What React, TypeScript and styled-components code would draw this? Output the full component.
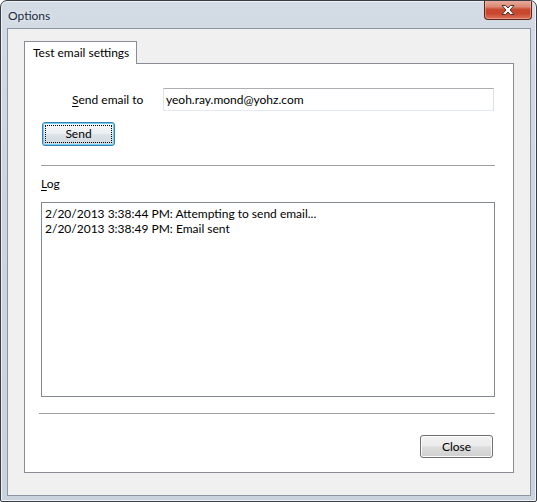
import React from "react";
import styled, { createGlobalStyle } from "styled-components";

const Global = createGlobalStyle`
  html, body { margin: 0; padding: 0; background: #ffffff; }
  body { font-family: "Lato", "Open Sans", sans-serif; font-size: 12px; color: #000; }
  * { box-sizing: border-box; }
`;

const Window = styled.div`
  width: 537px;
  height: 502px;
  border: 1px solid #3a3d42;
  border-radius: 7px 7px 2px 2px;
  background: linear-gradient(180deg, #d3dbe4 0%, #ccd6e0 40%, #c9d3de 100%);
  box-shadow: inset 0 0 0 1px #eef2f6;
  display: flex;
  flex-direction: column;
  overflow: hidden;
`;

const TitleBar = styled.div`
  height: 27px;
  display: flex;
  align-items: flex-start;
  justify-content: space-between;
`;

const Title = styled.div`
  padding: 7px 0 0 7px;
  font-size: 12px;
  color: #1b2c40;
  text-shadow: 0 0 6px rgba(255, 255, 255, 0.9);
`;

const CloseCaption = styled.div`
  margin: -1px 4px 0 0;
  width: 48px;
  height: 20px;
  border: 1px solid #5b2419;
  border-top: none;
  border-radius: 0 0 4px 4px;
  background: linear-gradient(180deg, #e9b0a2 0%, #dc8a76 35%, #c94a30 50%, #c8452b 70%, #d9745a 100%);
  box-shadow: inset 0 0 0 1px rgba(255, 200, 180, 0.45);
  display: flex;
  align-items: center;
  justify-content: center;
`;

const Client = styled.div`
  flex: 1;
  margin: 0 5px 5px 6px;
  border: 1px solid #8b96a2;
  background: #f0f0f0;
  padding: 12px 16px 22px 16px;
  display: flex;
  flex-direction: column;
`;

const TabStrip = styled.div`
  display: flex;
  height: 22px;
  position: relative;
  z-index: 1;
`;

const Tab = styled.div`
  height: 23px;
  padding: 0 7px 0 8px;
  border: 1px solid #898c95;
  border-bottom: none;
  background: #ffffff;
  display: flex;
  align-items: center;
  padding-bottom: 2px;
`;

const Panel = styled.div`
  flex: 1;
  border: 1px solid #898c95;
  background: #ffffff;
  display: flex;
  flex-direction: column;
  padding: 0 18px 0 16px;
`;

const FormRow = styled.div`
  display: flex;
  align-items: center;
  margin: 24px 1px 0 31px;
  height: 23px;
`;

const Label = styled.label`
  width: 91px;
  flex: none;
`;

const Key = styled.span`
  text-decoration: underline;
  text-underline-offset: 2px;
`;

const TextBox = styled.div`
  flex: 1;
  height: 23px;
  border: 1px solid;
  border-color: #abadb3 #dbdfe6 #e3e9ef #e2e3ea;
  padding: 0 2px;
  display: flex;
  align-items: center;
`;

const Button = styled.button<{ $default?: boolean }>`
  position: relative;
  width: 73px;
  height: ${(p) => (p.$default ? 24 : 23)}px;
  padding: 0 0 1px 0;
  font: inherit;
  color: #000;
  border-radius: 3px;
  border: 1px solid ${(p) => (p.$default ? "#3c7fb1" : "#707070")};
  background: ${(p) =>
    p.$default
      ? "linear-gradient(180deg, #f6f8fa 0%, #eceff2 48%, #dde3e8 52%, #d0d8de 100%)"
      : "linear-gradient(180deg, #f2f2f2 0%, #ebebeb 48%, #dddddd 52%, #cfcfcf 100%)"};
  box-shadow: inset 0 0 0 1px ${(p) => (p.$default ? "#6fd0f6" : "#fbfbfb")};
`;

const FocusRing = styled.span`
  position: absolute;
  inset: 2px;
  border: 1px dotted #000;
  border-radius: 1px;
`;

const SendButton = styled(Button)`
  margin: 11px 0 0 1px;
`;

const Separator = styled.div<{ $top: number; $left?: number }>`
  height: 1px;
  background: #a0a0a0;
  margin-top: ${(p) => p.$top}px;
  margin-left: ${(p) => p.$left ?? 0}px;
`;

const SectionLabel = styled.div`
  margin-top: 10px;
  height: 16px;
  line-height: 16px;
`;

const LogBox = styled.div`
  margin-top: 10px;
  height: 195px;
  border: 1px solid #828790;
  padding: 3px 3px;
  line-height: 15px;
`;

const Footer = styled.div`
  display: flex;
  justify-content: flex-end;
  margin-top: 21px;
  padding-right: 2px;
`;

const CloseX = () => (
  <svg width="16" height="12" viewBox="0 0 16 12">
    <path
      d="M2 1.5 L5.5 1.5 L8 4 L10.5 1.5 L14 1.5 L10 6 L14 10.5 L10.5 10.5 L8 8 L5.5 10.5 L2 10.5 L6 6 Z"
      fill="#ffffff"
      stroke="#4a3530"
      strokeWidth="1"
      strokeLinejoin="round"
    />
  </svg>
);

export default function App() {
  return (
    <>
      <Global />
      <Window>
        <TitleBar>
          <Title>Options</Title>
          <CloseCaption>
            <CloseX />
          </CloseCaption>
        </TitleBar>
        <Client>
          <TabStrip>
            <Tab>Test email settings</Tab>
          </TabStrip>
          <Panel>
            <FormRow>
              <Label>
                <Key>S</Key>end email to
              </Label>
              <TextBox>yeoh.ray.mond@yohz.com</TextBox>
            </FormRow>
            <div>
              <SendButton $default>
                Send
                <FocusRing />
              </SendButton>
            </div>
            <Separator $top={19} />
            <SectionLabel>
              <Key>L</Key>og
            </SectionLabel>
            <LogBox>
              <div>2/20/2013 3:38:44 PM: Attempting to send email...</div>
              <div>2/20/2013 3:38:49 PM: Email sent</div>
            </LogBox>
            <Separator $top={16} $left={-2} />
            <Footer>
              <Button>Close</Button>
            </Footer>
          </Panel>
        </Client>
      </Window>
    </>
  );
}
